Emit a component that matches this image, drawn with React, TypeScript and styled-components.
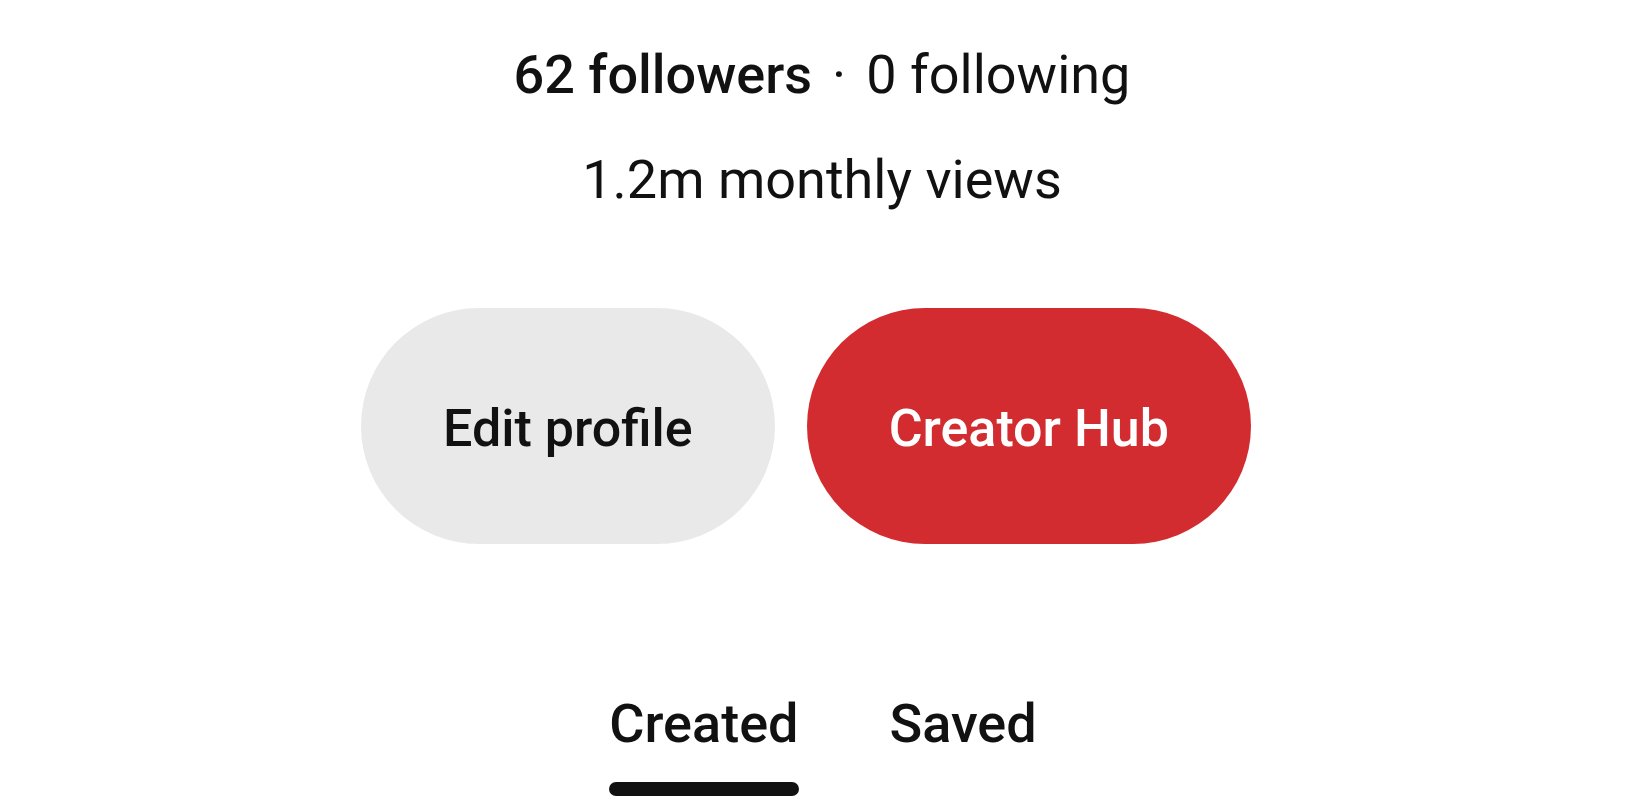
import React, { useState } from "react";
import styled, { createGlobalStyle } from "styled-components";

const GlobalStyle = createGlobalStyle`
  html, body {
    margin: 0;
    padding: 0;
    background: #ffffff;
  }
  body {
    font-family: Roboto, "Noto Sans", "Liberation Sans", sans-serif;
    color: #111111;
  }
`;

const Page = styled.main`
  display: flex;
  flex-direction: column;
  align-items: center;
  padding-top: 43px;
  height: 811px;
  box-sizing: border-box;
  overflow: hidden;
`;

const StatLine = styled.p<{ $gap?: number }>`
  margin: 0;
  margin-top: ${(p) => p.$gap ?? 0}px;
  font-size: 54px;
  line-height: 64px;
  font-weight: 400;
  white-space: nowrap;
`;

const Strong = styled.span`
  font-weight: 500;
`;

const Dot = styled.span`
  margin: 0 20px;
`;

const ButtonRow = styled.div`
  display: flex;
  gap: 32px;
  margin-top: 96px;
  padding-right: 32px;
`;

const PillButton = styled.button<{ $primary?: boolean }>`
  height: 236px;
  padding: 6px 82px 0;
  border: none;
  border-radius: 118px;
  background: ${(p) => (p.$primary ? "#d22c30" : "#e9e9e9")};
  color: ${(p) => (p.$primary ? "#ffffff" : "#111111")};
  font-family: inherit;
  font-size: 52px;
  font-weight: 500;
  line-height: 64px;
  cursor: pointer;
`;

const Tabs = styled.nav`
  display: flex;
  gap: 91px;
  margin-top: 148px;
  padding-left: 2px;
`;

const Tab = styled.button<{ $active?: boolean }>`
  display: flex;
  flex-direction: column;
  align-items: stretch;
  gap: 26px;
  padding: 0;
  border: none;
  background: none;
  color: #111111;
  font-family: inherit;
  font-size: 54px;
  font-weight: 500;
  line-height: 64px;
  cursor: pointer;

  &::after {
    content: "";
    display: block;
    height: 14px;
    border-radius: 7px;
    background: ${(p) => (p.$active ? "#111111" : "transparent")};
  }
`;

export default function App() {
  const [tab, setTab] = useState<"created" | "saved">("created");

  return (
    <>
      <GlobalStyle />
      <Page>
        <StatLine>
          <Strong>62 followers</Strong>
          <Dot>·</Dot>0 following
        </StatLine>
        <StatLine $gap={41}>1.2m monthly views</StatLine>

        <ButtonRow>
          <PillButton>Edit profile</PillButton>
          <PillButton $primary>Creator Hub</PillButton>
        </ButtonRow>

        <Tabs>
          <Tab $active={tab === "created"} onClick={() => setTab("created")}>
            Created
          </Tab>
          <Tab $active={tab === "saved"} onClick={() => setTab("saved")}>
            Saved
          </Tab>
        </Tabs>
      </Page>
    </>
  );
}
